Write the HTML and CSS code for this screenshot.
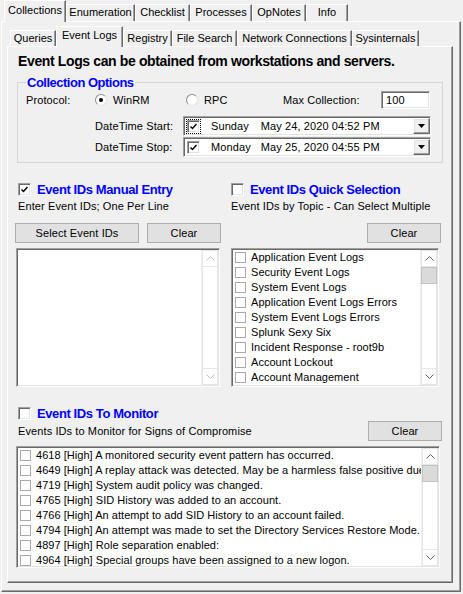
FILE: index.html
```html
<!DOCTYPE html>
<html>
<head>
<meta charset="utf-8">
<link rel="stylesheet" href="styles.css">
</head>
<body>
<div class="tabs outer-tabs">
  <div class="tab sel w-coll">Collections</div>
  <div class="tab w-enum">Enumeration</div>
  <div class="tab w-check">Checklist</div>
  <div class="tab w-proc">Processes</div>
  <div class="tab w-op">OpNotes</div>
  <div class="tab w-info">Info</div>
</div>
<div class="panel outer-panel">
  <div class="tabs inner-tabs">
    <div class="tab w-q">Queries</div>
    <div class="tab sel w-ev">Event Logs</div>
    <div class="tab w-reg">Registry</div>
    <div class="tab w-fs">File Search</div>
    <div class="tab w-net">Network Connections</div>
    <div class="tab w-sys">Sysinternals</div>
  </div>
  <div class="panel inner-panel">
    <div class="heading">Event Logs can be obtained from workstations and servers.</div>

    <fieldset class="group">
      <legend>Collection Options</legend>
      <div class="prow">
        <span class="plabel">Protocol:</span>
        <span class="radio-item w-winrm"><span class="radio on"></span><span class="rtext">WinRM</span></span>
        <span class="radio-item w-rpc"><span class="radio"></span><span class="rtext">RPC</span></span>
        <span class="maxlabel">Max Collection:</span>
        <span class="numbox">100</span>
      </div>
      <div class="drow first">
        <span class="dlabel">DateTime Start:</span>
        <div class="picker">
          <span class="focus"><span class="pchk"><svg width="9" height="9" viewBox="0 0 9 9"><path d="M1.5 4.5 L3.5 6.5 L7.5 2" fill="none" stroke="#000" stroke-width="1.4"/></svg></span></span>
          <span class="day">Sunday</span>
          <span class="date">May 24, 2020 04:52 PM</span>
          <span class="ddbtn"><svg width="7" height="4" viewBox="0 0 7 4"><polygon points="0,0 7,0 3.5,4" fill="#000"/></svg></span>
        </div>
      </div>
      <div class="drow">
        <span class="dlabel">DateTime Stop:</span>
        <div class="picker">
          <span class="nofocus"><span class="pchk"><svg width="9" height="9" viewBox="0 0 9 9"><path d="M1.5 4.5 L3.5 6.5 L7.5 2" fill="none" stroke="#000" stroke-width="1.4"/></svg></span></span>
          <span class="day">Monday</span>
          <span class="date">May 25, 2020 04:55 PM</span>
          <span class="ddbtn"><svg width="7" height="4" viewBox="0 0 7 4"><polygon points="0,0 7,0 3.5,4" fill="#000"/></svg></span>
        </div>
      </div>
    </fieldset>

    <div class="cols">
      <div class="col left">
        <div class="chkrow"><span class="cb3d"><svg width="9" height="9" viewBox="0 0 9 9"><path d="M1.5 4.5 L3.5 6.5 L7.5 2" fill="none" stroke="#000" stroke-width="1.5"/></svg></span><span class="blue">Event IDs Manual Entry</span></div>
        <div class="sub">Enter Event IDs; One Per Line</div>
        <div class="btnrow">
          <span class="btn w-sel">Select Event IDs</span>
          <span class="btn w-clr">Clear</span>
        </div>
        <div class="list lw-left">
          <div class="items"></div>
          <div class="sb">
            <span class="sbbtn dis"><svg width="9" height="5" viewBox="0 0 9 5"><polyline points="0.5,4.5 4.5,0.5 8.5,4.5" fill="none" stroke="#bfbfbf"/></svg></span>
            <span class="sbtrack"></span>
            <span class="sbbtn dis"><svg width="9" height="5" viewBox="0 0 9 5"><polyline points="0.5,0.5 4.5,4.5 8.5,0.5" fill="none" stroke="#bfbfbf"/></svg></span>
          </div>
        </div>
      </div>
      <div class="col right">
        <div class="chkrow"><span class="cb3d"></span><span class="blue">Event IDs Quick Selection</span></div>
        <div class="sub">Event IDs by Topic - Can Select Multiple</div>
        <div class="btnrow end">
          <span class="btn w-clr">Clear</span>
        </div>
        <div class="list lw-right">
          <div class="items">
            <div class="item"><span class="icb"></span>Application Event Logs</div>
            <div class="item"><span class="icb"></span>Security Event Logs</div>
            <div class="item"><span class="icb"></span>System Event Logs</div>
            <div class="item"><span class="icb"></span>Application Event Logs Errors</div>
            <div class="item"><span class="icb"></span>System Event Logs Errors</div>
            <div class="item"><span class="icb"></span>Splunk Sexy Six</div>
            <div class="item"><span class="icb"></span>Incident Response - root9b</div>
            <div class="item"><span class="icb"></span>Account Lockout</div>
            <div class="item"><span class="icb"></span>Account Management</div>
          </div>
          <div class="sb">
            <span class="sbbtn"><svg width="9" height="5" viewBox="0 0 9 5"><polyline points="0.5,4.5 4.5,0.5 8.5,4.5" fill="none" stroke="#606060"/></svg></span>
            <span class="thumb"></span>
            <span class="sbtrack"></span>
            <span class="sbbtn"><svg width="9" height="5" viewBox="0 0 9 5"><polyline points="0.5,0.5 4.5,4.5 8.5,0.5" fill="none" stroke="#606060"/></svg></span>
          </div>
        </div>
      </div>
    </div>

    <div class="monitor">
      <div class="chkrow"><span class="cb3d"></span><span class="blue">Event IDs To Monitor</span></div>
      <div class="mrow">
        <span class="msub">Events IDs to Monitor for Signs of Compromise</span>
        <span class="btn w-clr">Clear</span>
      </div>
      <div class="list lw-big">
        <div class="items">
          <div class="item"><span class="icb"></span>4618 [High] A monitored security event pattern has occurred.</div>
          <div class="item"><span class="icb"></span>4649 [High] A replay attack was detected. May be a harmless false positive due to misconfiguration error.</div>
          <div class="item"><span class="icb"></span>4719 [High] System audit policy was changed.</div>
          <div class="item"><span class="icb"></span>4765 [High] SID History was added to an account.</div>
          <div class="item"><span class="icb"></span>4766 [High] An attempt to add SID History to an account failed.</div>
          <div class="item"><span class="icb"></span>4794 [High] An attempt was made to set the Directory Services Restore Mode.</div>
          <div class="item"><span class="icb"></span>4897 [High] Role separation enabled:</div>
          <div class="item"><span class="icb"></span>4964 [High] Special groups have been assigned to a new logon.</div>
        </div>
        <div class="sb">
          <span class="sbbtn"><svg width="9" height="5" viewBox="0 0 9 5"><polyline points="0.5,4.5 4.5,0.5 8.5,4.5" fill="none" stroke="#606060"/></svg></span>
          <span class="thumb"></span>
          <span class="sbtrack"></span>
          <span class="sbbtn"><svg width="9" height="5" viewBox="0 0 9 5"><polyline points="0.5,0.5 4.5,4.5 8.5,0.5" fill="none" stroke="#606060"/></svg></span>
        </div>
      </div>
    </div>
  </div>
</div>
</body>
</html>
```
FILE: styles.css
```css
* { box-sizing: border-box; }
html, body { margin: 0; padding: 0; }
body {
  background: #f0f0f0;
  font-family: "Liberation Sans", Arial, sans-serif;
  font-size: 11px;
  line-height: 13px;
  letter-spacing: 0.1px;
  color: #000;
  width: 463px;
  height: 594px;
  overflow: hidden;
}

/* ---------- tabs ---------- */
.tabs { display: flex; align-items: flex-end; position: relative; z-index: 2; }
.outer-tabs { height: 21px; padding-left: 4px; }
.inner-tabs { height: 20px; margin: 4px 0 0 8px; }
.tab {
  display: flex; align-items: center; justify-content: center;
  border-top: 1px solid #fff;
  border-left: 1px solid #fff;
  border-right: 1px solid #696969;
  box-shadow: inset -1px 0 #a0a0a0;
  background: #f0f0f0;
  white-space: nowrap;
  letter-spacing: 0;
}
.outer-tabs .tab { height: 17px; padding-bottom: 1px; }
.outer-tabs .tab.sel { height: 22px; margin-bottom: -1px; padding-bottom: 3px; }
.inner-tabs .tab { height: 16px; padding-bottom: 1px; }
.inner-tabs .tab.sel { height: 21px; margin-bottom: -1px; padding-bottom: 3px; }

.w-coll { width: 62px; }
.w-enum { width: 69px; }
.w-check { width: 55px; }
.w-proc { width: 62px; }
.w-op { width: 54px; }
.w-info { width: 42px; }

.w-q { width: 46px; }
.w-ev { width: 67px; }
.w-reg { width: 49px; }
.w-fs { width: 65px; }
.w-net { width: 115px; }
.w-sys { width: 67px; }

/* ---------- panels ---------- */
.panel {
  border: 1px solid;
  border-color: #fff #696969 #696969 #fff;
  box-shadow: inset -1px -1px #a0a0a0;
  background: #f0f0f0;
}
.outer-panel { margin-left: 1px; width: 460px; height: 571px; }
.inner-panel { margin-left: 5px; width: 446px; height: 537px; position: relative; z-index: 1; }

.heading {
  margin: 6px 0 0 10px;
  font-weight: bold;
  font-size: 14px;
  line-height: 16px;
  letter-spacing: -0.37px;
  white-space: nowrap;
}

/* ---------- group box ---------- */
.group {
  margin: 6px 0 0 9px;
  width: 426px;
  padding: 1px 0 5px 0;
  border: 1px solid #d5d5d5;
  min-inline-size: 0;
}
.group legend {
  margin-left: 8px;
  padding: 0 1px;
  font-weight: bold;
  font-size: 13px;
  line-height: 15px;
  letter-spacing: -0.5px;
  color: #0000ff;
}
.prow { display: flex; align-items: center; height: 18px; }
.plabel { margin-left: 8px; width: 69px; }
.radio-item { display: flex; align-items: center; }
.w-winrm { width: 91px; }
.w-rpc { width: 97px; }
.radio {
  width: 12px; height: 12px; border-radius: 50%;
  border: 1px solid; border-color: #8d8d8d #e3e3e3 #e3e3e3 #8d8d8d;
  background: #fff;
  display: flex; align-items: center; justify-content: center;
}
.radio.on::after { content: ""; width: 4px; height: 4px; border-radius: 50%; background: #000; }
.rtext { margin-left: 6px; }
.maxlabel { width: 98px; }
.numbox {
  width: 49px; height: 18px;
  border: 1px solid; border-color: #a0a0a0 #fff #fff #a0a0a0;
  box-shadow: inset 1px 1px #696969, inset -1px -1px #e3e3e3;
  background: #fff;
  padding: 2px 0 0 4px;
}
.drow { display: flex; align-items: center; height: 20px; padding-left: 77px; margin-top: 1px; }
.drow.first { margin-top: 7px; }
.dlabel { width: 88px; }
.picker {
  width: 248px; height: 20px;
  border: 1px solid; border-color: #a0a0a0 #fff #fff #a0a0a0;
  box-shadow: inset 1px 1px #696969, inset -1px -1px #e3e3e3;
  background: #fff;
  display: flex; align-items: center;
  padding-left: 2px;
}
.focus, .nofocus { width: 15px; height: 15px; display: flex; align-items: center; justify-content: center; border: 1px dotted #000; }
.nofocus { border-color: transparent; }
.pchk {
  width: 13px; height: 13px;
  border: 1px solid; border-color: #a0a0a0 #fff #fff #a0a0a0;
  box-shadow: inset 1px 1px #696969, inset -1px -1px #e3e3e3;
  display: flex; align-items: center; justify-content: center;
  background: #fff;
}
.day { margin-left: 10px; width: 50px; }
.date { width: 153px; }
.ddbtn {
  width: 17px; height: 16px;
  border: 1px solid; border-color: #fff #696969 #696969 #fff;
  box-shadow: inset -1px -1px #a0a0a0, inset 1px 1px #e3e3e3;
  background: #f0f0f0;
  display: flex; align-items: center; justify-content: center;
}

/* ---------- columns ---------- */
.cols { display: grid; grid-template-columns: 206px 210px; column-gap: 10px; margin: 19px 0 0 7px; }
.chkrow { display: flex; align-items: center; height: 15px; }
.left .chkrow { padding-left: 3px; }
.cb3d {
  width: 13px; height: 13px; flex: none;
  border: 1px solid; border-color: #a0a0a0 #fff #fff #a0a0a0;
  box-shadow: inset 1px 1px #696969, inset -1px -1px #e3e3e3;
  background: #fff;
  display: flex; align-items: center; justify-content: center;
}
.blue { color: #0000ff; font-weight: bold; font-size: 13px; letter-spacing: -0.4px; margin-left: 6px; white-space: nowrap; }
.sub { margin-top: 3px; white-space: nowrap; }
.left .sub { padding-left: 3px; }
.btnrow { display: flex; justify-content: space-between; margin-top: 10px; height: 20px; }
.btnrow.end { justify-content: flex-end; }
.btn {
  display: flex; align-items: center; justify-content: center;
  height: 20px;
  background: #e1e1e1;
  border: 1px solid #adadad;
}
.w-sel { width: 124px; }
.w-clr { width: 74px; }

.list {
  margin-top: 5px;
  display: flex;
  background: #fff;
  border: 1px solid; border-color: #a0a0a0 #fff #fff #a0a0a0;
  box-shadow: inset 1px 1px #696969, inset -1px -1px #e3e3e3;
  padding: 1px 1px 1px 1px;
}
.lw-left { width: 204px; height: 139px; margin-left: 1px; }
.lw-right { width: 208px; height: 139px; }
.lw-big { width: 424px; height: 122px; margin-left: -2px; }
.items { flex: 1; overflow: hidden; min-width: 0; }
.item { display: flex; align-items: center; height: 15px; white-space: nowrap; letter-spacing: 0.04px; }
.icb { width: 11px; height: 11px; flex: none; border: 1px solid #a9a9a9; background: #fff; margin: 0 5px 0 2px; }

.sb { width: 17px; flex: none; display: flex; flex-direction: column; background: #fff; border-left: 1px solid #f0f0f0; }
.sbbtn { height: 17px; flex: none; display: flex; align-items: center; justify-content: center; border: 1px solid #e6e6e6; }
.thumb { height: 17px; flex: none; background: #dadada; border: 1px solid #c2c2c2; }
.sbtrack { flex: 1; border-left: 1px solid #e6e6e6; border-right: 1px solid #e6e6e6; }

/* ---------- monitor ---------- */
.monitor { margin: 19px 0 0 10px; }
.mrow { display: flex; align-items: center; justify-content: space-between; height: 20px; width: 424px; }
```
